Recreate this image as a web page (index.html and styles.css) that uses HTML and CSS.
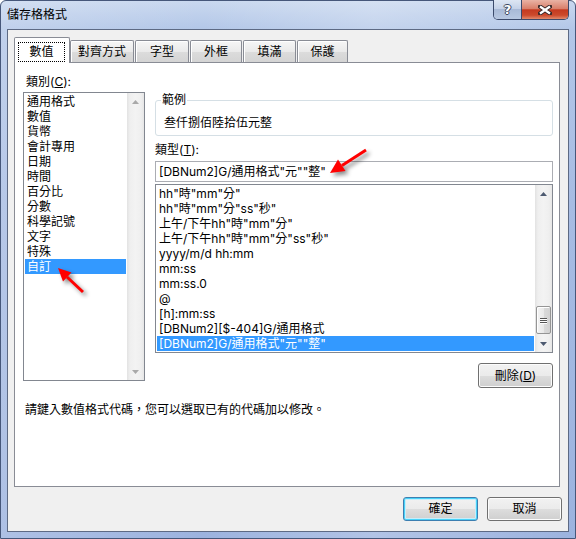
FILE: index.html
```html
<!DOCTYPE html>
<html lang="zh-Hant">
<head>
<meta charset="utf-8">
<title>儲存格格式</title>
<link rel="stylesheet" href="styles.css">
</head>
<body>
<div class="window">
  <div class="titlebar">
    <span class="title">儲存格格式</span>
    <div class="caption">
      <div class="cbtn help">?</div>
      <div class="cbtn close">
        <svg width="14" height="10" viewBox="0 0 14 10"><path d="M2 1.5 L12 8.5 M12 1.5 L2 8.5" stroke="#3a2a2a" stroke-width="4.2" stroke-linecap="square" fill="none"/><path d="M2 1.5 L12 8.5 M12 1.5 L2 8.5" stroke="#fff" stroke-width="2.2" fill="none"/></svg>
      </div>
    </div>
  </div>

  <div class="client">
    <div class="tabs">
      <div class="tab active"><span class="focus">數值</span></div>
      <div class="tab w1">對齊方式</div>
      <div class="tab w2 gap">字型</div>
      <div class="tab w3 gap">外框</div>
      <div class="tab w4 gap">填滿</div>
      <div class="tab w5 gap">保護</div>
    </div>

    <div class="panel">
      <div class="left">
        <div class="label lab-cat">類別(<u>C</u>):</div>
        <div class="listbox cat">
          <ul class="items">
            <li>通用格式</li>
            <li>數值</li>
            <li>貨幣</li>
            <li>會計專用</li>
            <li>日期</li>
            <li>時間</li>
            <li>百分比</li>
            <li>分數</li>
            <li>科學記號</li>
            <li>文字</li>
            <li>特殊</li>
            <li class="sel">自訂</li>
          </ul>
          <div class="vscroll disabled">
            <div class="sb-arrow"><svg width="7" height="4" viewBox="0 0 7 4"><polygon points="3.5,0 7,4 0,4"/></svg></div>
            <div class="sb-track"></div>
            <div class="sb-arrow"><svg width="7" height="4" viewBox="0 0 7 4"><polygon points="0,0 7,0 3.5,4"/></svg></div>
          </div>
        </div>
      </div>

      <div class="right">
        <fieldset class="sample">
          <legend>範例</legend>
          <div class="sample-text">叁仟捌佰陸拾伍元整</div>
        </fieldset>
        <div class="label lab-type">類型(<u>T</u>):</div>
        <div class="input">[DBNum2]G/通用格式"元""整"</div>
        <div class="listbox fmt">
          <ul class="items">
            <li>hh"時"mm"分"</li>
            <li>hh"時"mm"分"ss"秒"</li>
            <li>上午/下午hh"時"mm"分"</li>
            <li>上午/下午hh"時"mm"分"ss"秒"</li>
            <li>yyyy/m/d hh:mm</li>
            <li>mm:ss</li>
            <li>mm:ss.0</li>
            <li>@</li>
            <li>[h]:mm:ss</li>
            <li>[DBNum2][$-404]G/通用格式</li>
            <li class="sel">[DBNum2]G/通用格式"元""整"</li>
          </ul>
          <div class="vscroll">
            <div class="sb-arrow"><svg width="7" height="4" viewBox="0 0 7 4"><polygon points="3.5,0 7,4 0,4"/></svg></div>
            <div class="sb-track">
              <div class="thumb"><span></span><span></span><span></span></div>
            </div>
            <div class="sb-arrow"><svg width="7" height="4" viewBox="0 0 7 4"><polygon points="0,0 7,0 3.5,4"/></svg></div>
          </div>
        </div>
        <div class="btnrow"><button class="btn">刪除(<u>D</u>)</button></div>
      </div>

      <p class="desc">請鍵入數值格式代碼，您可以選取已有的代碼加以修改。</p>
    </div>

    <div class="footer">
      <button class="btn default">確定</button>
      <button class="btn">取消</button>
    </div>
  </div>

  <svg class="arrows" width="576" height="539" viewBox="0 0 576 539">
    <g class="arrow">
      <line x1="83" y1="292" x2="67" y2="277" stroke="#ff0000" stroke-width="3"/>
      <polygon points="58,268 71.5,272.5 63,281.5" fill="#ff0000"/>
    </g>
    <g class="arrow">
      <line x1="366" y1="150" x2="342" y2="165.5" stroke="#ff0000" stroke-width="3"/>
      <polygon points="330,173 338,159.5 345.5,171" fill="#ff0000"/>
    </g>
  </svg>
</div>
</body>
</html>
```

FILE: styles.css
```css
* { box-sizing: border-box; }
html, body { margin: 0; padding: 0; }
body {
  width: 576px;
  height: 539px;
  overflow: hidden;
  font-family: Inter, "Noto Sans CJK TC", sans-serif;
  font-size: 12px;
  color: #000;
  background: #fff;
}
u { text-decoration: underline; text-underline-offset: 1px; }

.window {
  position: relative;
  width: 576px;
  height: 539px;
  border: 1px solid #46577a;
  border-radius: 6px 6px 0 0;
  display: flex;
  flex-direction: column;
  background:
    linear-gradient(to right, rgba(255,255,255,0.18), rgba(255,255,255,0) 35%, rgba(255,255,255,0.22) 65%, rgba(255,255,255,0) 100%),
    linear-gradient(to bottom, #c9d8ef 0, #b3c7e8 28px, #a7bce3 200px, #9cb3df 100%);
}

/* title bar */
.titlebar {
  height: 28px;
  display: flex;
  align-items: flex-start;
}
.title {
  padding: 6px 0 0 6px;
  line-height: 15px;
  color: #000;
}
.caption {
  margin: -1px 6px 0 auto;
  height: 20px;
  display: flex;
  border: 1px solid #3b4a6b;
  border-top: none;
  border-radius: 0 0 5px 5px;
  overflow: hidden;
}
.cbtn {
  height: 19px;
  display: flex;
  align-items: center;
  justify-content: center;
}
.help {
  width: 28px;
  border-right: 1px solid #3b4a6b;
  background: linear-gradient(to bottom, #dde6f3 0%, #c5d2e8 45%, #a9bad7 50%, #b8c8e2 100%);
  color: #fff;
  font-family: "DejaVu Sans", sans-serif;
  font-weight: bold;
  font-size: 13px;
  line-height: 19px;
  text-shadow: 1px 0 0 #3b4660, -1px 0 0 #3b4660, 0 1px 0 #3b4660, 0 -1px 0 #3b4660;
}
.close {
  width: 46px;
  background: linear-gradient(to bottom, #e9b3a5 0%, #d9806b 45%, #c43a20 52%, #cc4a2c 80%, #e28a6c 100%);
}

/* client area */
.client {
  margin: 0 6px 0 6px;
  height: 503px;
  background: #f0f0f0;
  border: 1px solid #5d6a84;
  padding: 7px 6px 0 6px;
}

.tabs {
  position: relative;
  z-index: 2;
  height: 26px;
  margin-bottom: -1px;
  display: flex;
  align-items: flex-end;
}
.tab {
  height: 22px;
  margin-bottom: 1px;
  border: 1px solid #898c95;
  border-bottom: none;
  border-radius: 2px 2px 0 0;
  background: linear-gradient(to bottom, #f6f6f6 0%, #eaeaea 50%, #dcdcdc 51%, #d4d4d4 100%);
  box-shadow: inset 1px 1px 0 #fff;
  display: flex;
  align-items: center;
  justify-content: center;
  line-height: 15px;
}
.tab.gap { margin-left: 1px; }
.w1 { width: 64px; }
.w2 { width: 54px; }
.w3 { width: 52px; }
.w4 { width: 53px; }
.w5 { width: 51px; }
.tab.active {
  width: 56px;
  height: 26px;
  margin-bottom: 0;
  background: #fff;
  box-shadow: none;
  align-items: flex-start;
  justify-content: flex-start;
  padding: 4px 0 0 3px;
}
.focus {
  display: block;
  width: 47px;
  height: 20px;
  border: 1px dotted #000;
  text-align: center;
  line-height: 17px;
}

/* tab panel */
.panel {
  position: relative;
  z-index: 1;
  width: 546px;
  height: 425px;
  border: 1px solid #898c95;
  background: #fff;
  padding: 11px 6px 0 8px;
  display: grid;
  grid-template-columns: 122px 398px;
  column-gap: 10px;
  align-items: start;
  align-content: start;
}

.label { line-height: 15px; }
.lab-cat { padding-left: 3px; }

.listbox {
  display: flex;
  border: 1px solid #828790;
  background: #fff;
}
.listbox.cat { height: 289px; margin-top: 3px; }
.listbox.fmt { height: 169px; margin-top: 2px; }
.items {
  flex: 1;
  list-style: none;
  margin: 0;
  padding: 1px;
  min-width: 0;
}
.items li {
  height: 15px;
  line-height: 15px;
  padding-left: 2px;
  white-space: nowrap;
}
.items li.sel { background: #3399ff; color: #fff; }

.vscroll {
  width: 17px;
  display: flex;
  flex-direction: column;
  background: linear-gradient(to right, #e2e2e2 0, #efefef 3px, #f3f3f3 50%, #efefef 14px, #e6e6e6 17px);
}
.sb-arrow {
  height: 17px;
  display: flex;
  align-items: center;
  justify-content: center;
}
.sb-arrow svg { fill: #4d5a70; }
.vscroll.disabled .sb-arrow svg { fill: #a9a9a9; }
.sb-track {
  flex: 1;
  display: flex;
  flex-direction: column;
  align-items: center;
}
.thumb {
  margin-top: auto;
  margin-bottom: 1px;
  width: 15px;
  height: 28px;
  border: 1px solid #959595;
  border-radius: 2px;
  background: linear-gradient(to right, #f4f4f4 0%, #e9e9e9 50%, #dadada 51%, #d2d2d2 100%);
  box-shadow: inset 1px 1px 0 #fff;
  display: flex;
  flex-direction: column;
  align-items: center;
  justify-content: center;
  gap: 1px;
}
.thumb span {
  display: block;
  width: 7px;
  height: 1px;
  background: #555;
  box-shadow: 0 1px 0 #fff;
}

/* right column */
.right { padding-top: 18px; }
.sample {
  margin: 0;
  min-width: 0;
  border: 1px solid #d5dfe5;
  border-radius: 3px;
  padding: 7px 8px 5px 8px;
}
.sample legend {
  padding: 0 1px;
  margin-left: -3px;
  line-height: 16px;
}
.sample-text { line-height: 15px; }
.lab-type { margin-top: 6px; }
.input {
  margin-top: 4px;
  height: 21px;
  border: 1px solid #abadb3;
  padding: 0 3px;
  line-height: 19px;
  white-space: nowrap;
}
.btnrow {
  margin-top: 10px;
  display: flex;
  justify-content: flex-end;
}

.btn {
  width: 75px;
  height: 25px;
  padding: 0;
  border: 1px solid #707070;
  border-radius: 3px;
  background: linear-gradient(to bottom, #f2f2f2 0%, #ebebeb 50%, #dddddd 51%, #cfcfcf 100%);
  box-shadow: inset 0 0 0 1px #fcfcfc;
  font-family: Inter, "Noto Sans CJK TC", sans-serif;
  font-size: 12px;
  line-height: 21px;
  color: #000;
}
.btn.default {
  border-color: #3c7fb1;
  box-shadow: inset 0 0 0 1px #48d2f8, inset 0 0 0 2px #c6eefb;
}

.desc {
  grid-column: 1 / -1;
  margin: 14px 0 0 2px;
  line-height: 15px;
}

.footer {
  margin-top: 10px;
  display: flex;
  justify-content: flex-end;
  gap: 9px;
}
.footer .btn { height: 24px; line-height: 20px; }

/* annotation arrows */
.arrows {
  position: absolute;
  left: -1px;
  top: -1px;
  z-index: 5;
  pointer-events: none;
}
.arrow { filter: drop-shadow(3px 3px 2px rgba(0,0,0,0.45)); }
```
